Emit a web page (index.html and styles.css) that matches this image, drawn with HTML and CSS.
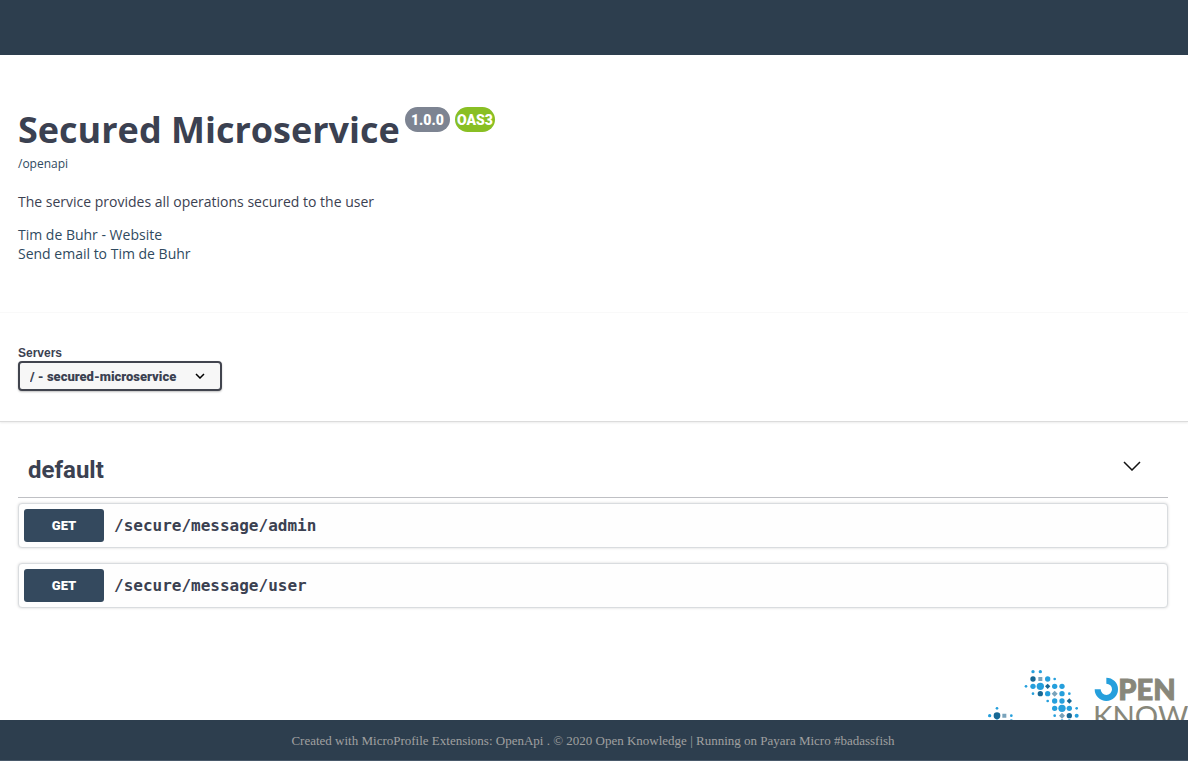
FILE: index.html
```html
<!DOCTYPE html>
<html lang="en">
<head>
<meta charset="utf-8">
<meta name="viewport" content="width=device-width, initial-scale=1">
<title>Secured Microservice</title>
<link rel="stylesheet" href="styles.css">
</head>
<body>
<header class="topbar"></header>
<main class="content">
  <section class="info">
    <h1 class="title">Secured Microservice
      <span class="badges"><span class="badge">1.0.0</span><span class="badge badge-oas">OAS3</span></span>
    </h1>
    <a class="spec-link" href="#">/openapi</a>
    <p class="description">The service provides all operations secured to the user</p>
    <div class="contact"><a href="#">Tim de Buhr - Website</a><a href="#">Send email to Tim de Buhr</a></div>
  </section>
  <section class="servers">
    <label class="servers-label" for="server">Servers</label>
    <div class="select-wrap">
      <select id="server" class="server-select"><option>/ - secured-microservice</option></select>
      <svg class="select-arrow" viewBox="0 0 10 6" aria-hidden="true"><path d="M1 1l4 4 4-4"/></svg>
    </div>
  </section>
  <section class="operations">
    <div class="tag">
      <h2 class="tag-name">default</h2>
      <button class="tag-toggle" type="button" aria-label="Collapse default"><svg viewBox="0 0 18 10" aria-hidden="true"><path d="M1 1l8 8 8-8"/></svg></button>
    </div>
    <div class="operation"><button class="method" type="button">GET</button><a class="path" href="#">/secure/message/admin</a></div>
    <div class="operation"><button class="method" type="button">GET</button><a class="path" href="#">/secure/message/user</a></div>
  </section>
</main>
<svg class="logo" viewBox="42 54 612 156" role="img" aria-label="Open Knowledge">
  <g fill="#259fdc">
    <circle cx="189" cy="65" r="5"/><circle cx="211" cy="65" r="5"/>
    <circle cx="233" cy="87" r="8"/><circle cx="254" cy="87" r="4"/>
    <circle cx="168" cy="109" r="4"/><circle cx="189" cy="109" r="8"/><circle cx="211" cy="109" r="11"/><circle cx="254" cy="109" r="8"/><circle cx="276" cy="109" r="8"/>
    <circle cx="189" cy="131" r="4"/><circle cx="233" cy="131" r="8"/><circle cx="276" cy="131" r="8"/><circle cx="298" cy="131" r="4"/>
    <circle cx="233" cy="153" r="4"/><circle cx="254" cy="153" r="8"/><circle cx="276" cy="153" r="8"/>
    <circle cx="81" cy="175" r="4"/><circle cx="254" cy="175" r="8"/><circle cx="276" cy="175" r="11"/><circle cx="298" cy="175" r="8"/><circle cx="320" cy="175" r="4"/>
    <circle cx="59" cy="197" r="5"/><circle cx="124" cy="197" r="4"/><circle cx="254" cy="197" r="4"/><circle cx="320" cy="197" r="6"/>
    <circle cx="81" cy="213" r="5"/><circle cx="124" cy="213" r="5"/><circle cx="276" cy="213" r="5"/><circle cx="298" cy="213" r="5"/>
  </g>
  <g fill="#176894">
    <circle cx="189" cy="87" r="8"/><path d="M233 101l8 8-8 8-8-8z"/><circle cx="211" cy="131" r="8"/><path d="M298 145l8 8-8 8-8-8z"/>
    <circle cx="81" cy="197" r="10"/><circle cx="298" cy="197" r="8"/>
  </g>
  <g fill="#79a3bb">
    <path d="M205 81h12v12h-12zM254 122l9 9-9 9-9-9zM97 191h12v12H97zM276 188l9 9-9 9-9-9z"/>
  </g>
  <path d="M383 118a26 26 0 1 0 26-26" fill="none" stroke="#259fdc" stroke-width="18"/>
  <text class="logo-bold" x="445" y="149">PEN</text>
  <text class="logo-light" x="369" y="231">KNOW</text>
</svg>
<footer class="footer">Created with MicroProfile Extensions: OpenApi . © 2020 Open Knowledge | Running on Payara Micro #badassfish</footer>
</body>
</html>
```
FILE: styles.css
```css
* { box-sizing: border-box; }
body {
  margin: 0;
  min-height: 100vh;
  display: flex;
  flex-direction: column;
  background: #fff;
  color: #3b4151;
  font-family: "Open Sans", sans-serif;
  font-size: 14px;
}
a { color: #2f4a60; text-decoration: none; }
.topbar { height: 55px; background: #2d3e4e; }
.content { flex: 1; }
.info { padding: 50px 18px 49px; border-bottom: 1px solid #fafafa; }
.title {
  display: flex;
  align-items: flex-start;
  gap: 5px;
  margin: 0;
  font-size: 36px;
  line-height: 50px;
}
.badges { display: flex; gap: 5px; padding-top: 2px; }
.badge {
  display: flex;
  align-items: center;
  justify-content: center;
  width: 45px;
  height: 25px;
  border-radius: 13px;
  background: #7d8492;
  color: #fff;
  font: 900 14px/20px "Roboto", sans-serif;
}
.badge-oas { width: 40px; background: #89bf24; }
.spec-link { display: block; font-size: 12px; line-height: 17px; }
.description { margin: 20px 0 14px; line-height: 19px; }
.contact { display: flex; flex-direction: column; align-items: flex-start; line-height: 19px; }
.servers {
  padding: 32px 18px 30px;
  border-bottom: 1px solid #dcdcdc;
  box-shadow: 0 1px 2px rgba(0, 0, 0, .08);
}
.servers-label {
  display: block;
  font: bold 12px/16px "Liberation Sans", sans-serif;
}
.select-wrap { position: relative; width: 204px; }
.server-select {
  display: block;
  appearance: none;
  width: 100%;
  height: 30px;
  padding: 0 32px 0 10px;
  border: 2px solid #41444e;
  border-radius: 4px;
  background: #f7f7f7;
  box-shadow: 0 1px 2px rgba(0, 0, 0, .25);
  color: #3b4151;
  font: 900 13px "Roboto", sans-serif;
}
.select-arrow {
  position: absolute;
  right: 17px;
  top: 12px;
  width: 10px;
  height: 6px;
  pointer-events: none;
}
.select-arrow path { fill: none; stroke: #000; stroke-width: 1.5; }
.operations { padding: 30px 20px 0 18px; }
.tag {
  display: flex;
  align-items: center;
  justify-content: space-between;
  height: 46px;
  margin-bottom: 5px;
  padding: 0 27px 10px 10px;
  border-bottom: 1px solid #bfc0c4;
}
.tag-name { margin: 0; font: bold 24px/36px "Roboto", sans-serif; }
.tag-toggle { display: flex; padding: 0 0 8px; border: 0; background: none; }
.tag-toggle svg { width: 18px; height: 10px; }
.tag-toggle path { fill: none; stroke: #111; stroke-width: 1.5; }
.operation {
  display: flex;
  align-items: center;
  gap: 10px;
  margin-bottom: 15px;
  padding: 5px;
  border: 1px solid #d9dcdf;
  border-radius: 4px;
  background: #fefefe;
  box-shadow: 0 0 3px rgba(0, 0, 0, .16);
}
.method {
  width: 80px;
  height: 33px;
  padding: 0;
  border: 0;
  border-radius: 3px;
  background: #34495e;
  color: #fff;
  font: 900 13px "Roboto", sans-serif;
}
.path { color: #3b4151; font: bold 16px/20px "DejaVu Sans Mono", monospace; }
.logo { align-self: flex-end; width: 204px; height: 52px; }
.logo text { fill: #88877a; }
.logo-bold { font: 900 87px "Lato", sans-serif; stroke: #88877a; stroke-width: 3; }
.logo-light { font: 400 88px "Lato", sans-serif; }
.footer {
  height: 41px;
  padding: 0 16px 0 14px;
  border-bottom: 1px solid #49596a;
  background: #2d3e4e;
  color: #a0a0a0;
  font: 13px/41px "Liberation Serif", serif;
  text-align: center;
}
```
